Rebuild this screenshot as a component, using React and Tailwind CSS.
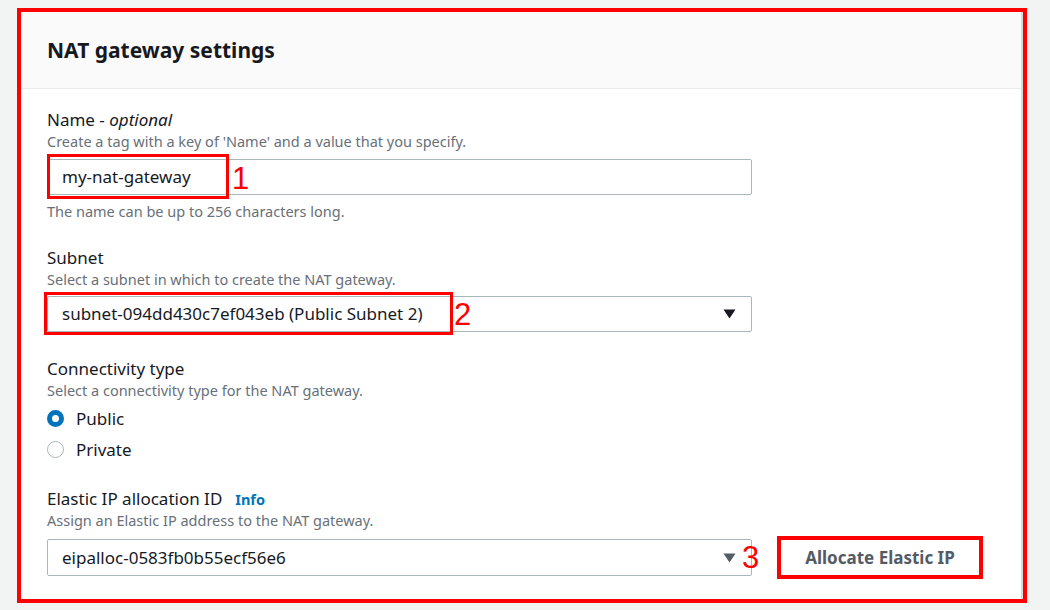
import React from 'react';

const font = { fontFamily: '"Noto Sans", "Open Sans", Arial, sans-serif' };

function Caret({ muted }) {
  return (
    <svg width="13" height="10" viewBox="0 0 13 10" className="shrink-0">
      <path d="M0.5 0.5 H12.5 L6.5 9.5 Z" fill={muted ? '#545b64' : '#16191f'} />
    </svg>
  );
}

function Mark({ n, className }) {
  return (
    <span
      className={`absolute text-[31px] leading-none text-[#ff0000] ${className}`}
      style={{ fontFamily: '"Liberation Sans", Arial, sans-serif', fontWeight: 300 }}
    >
      {n}
    </span>
  );
}

function Label({ children }) {
  return <p className="text-[17px] leading-[22px] text-[#16191f]">{children}</p>;
}

function Desc({ children }) {
  return <p className="text-[14.5px] leading-[20px] text-[#687078]">{children}</p>;
}

function Radio({ checked, label }) {
  return (
    <label className="flex h-[31px] items-center gap-[12px]">
      {checked ? (
        <span className="h-[17px] w-[17px] rounded-full border-[5px] border-[#0073bb] bg-white" />
      ) : (
        <span className="h-[17px] w-[17px] rounded-full border-[1.5px] border-[#aab7b8] bg-white" />
      )}
      <span className="text-[17px] text-[#16191f]">{label}</span>
    </label>
  );
}

export default function App() {
  return (
    <div className="h-[610px] w-[1050px] bg-[#f2f3f3] pl-[17px] pt-[8px]" style={font}>
      <div className="h-[595px] w-[1010px] border-4 border-[#ff0000] bg-white">
        <div className="flex h-full flex-col border-r-2 border-[#d5dbdb]">
          <div className="flex h-[77px] items-center border-b border-[#eaeded] bg-[#fafafa] pl-[26px] pt-[1px]">
            <h2 className="text-[21px] font-bold text-[#16191f]">NAT gateway settings</h2>
          </div>

          <div className="flex flex-col pl-[26px] pt-[20px]">
            <Label>
              Name - <i>optional</i>
            </Label>
            <Desc>Create a tag with a key of 'Name' and a value that you specify.</Desc>
            <div className="relative mt-[8px] flex h-[36px] w-[705px] items-center rounded-[2px] border border-[#aab7b8] px-[14px]">
              <span className="text-[17px] text-[#16191f]">my-nat-gateway</span>
              <div className="absolute left-[-1px] top-[-6px] h-[45px] w-[182px] border-[3px] border-[#ff0000]" />
              <Mark n="1" className="left-[184px] top-[3px]" />
            </div>
            <p className="mt-[7px] text-[14.5px] leading-[18px] text-[#687078]">
              The name can be up to 256 characters long.
            </p>

            <div className="mt-[27px]">
              <Label>Subnet</Label>
              <Desc>Select a subnet in which to create the NAT gateway.</Desc>
            </div>
            <div className="relative mt-[7px] flex h-[36px] w-[705px] items-center justify-between rounded-[2px] border border-[#aab7b8] pl-[14px] pr-[15px]">
              <span className="text-[17px] text-[#16191f]">subnet-094dd430c7ef043eb (Public Subnet 2)</span>
              <Caret />
              <div className="absolute left-[-4px] top-[-5px] h-[43px] w-[409px] border-[3px] border-[#ff0000]" />
              <Mark n="2" className="left-[406px] top-[2px]" />
            </div>

            <div className="mt-[26px]">
              <Label>Connectivity type</Label>
              <Desc>Select a connectivity type for the NAT gateway.</Desc>
            </div>
            <div className="mt-[3px] flex flex-col">
              <Radio checked label="Public" />
              <Radio label="Private" />
            </div>

            <div className="mt-[23px]">
              <p className="flex items-baseline gap-[13px] text-[17px] leading-[22px] text-[#16191f]">
                Elastic IP allocation ID
                <span className="text-[14.5px] font-bold text-[#0073bb]">Info</span>
              </p>
              <Desc>Assign an Elastic IP address to the NAT gateway.</Desc>
            </div>
            <div className="mt-[6px] flex items-center">
              <div className="relative flex h-[37px] w-[705px] items-center justify-between rounded-[2px] border border-[#aab7b8] pl-[14px] pr-[15px]">
                <span className="text-[17px] text-[#16191f]">eipalloc-0583fb0b55ecf56e6</span>
                <Caret muted />
                <Mark n="3" className="left-[694px] top-[2px]" />
              </div>
              <div className="ml-[25px] flex h-[43px] w-[206px] items-center justify-center border-4 border-[#ff0000]">
                <span className="text-[17px] font-bold text-[#545b64]">Allocate Elastic IP</span>
              </div>
            </div>
          </div>
        </div>
      </div>
    </div>
  );
}
